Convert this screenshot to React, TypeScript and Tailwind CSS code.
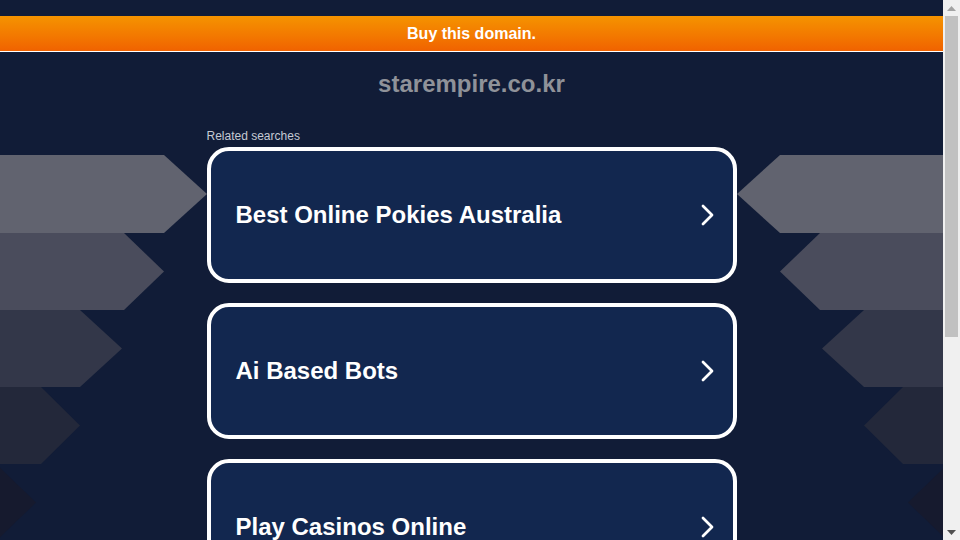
import React from "react";

const cards = ["Best Online Pokies Australia", "Ai Based Bots", "Play Casinos Online"];

function Background() {
  const rows = [
    { y0: 155, y1: 233, flat: 164, tip: 207, color: "#61636f" },
    { y0: 233, y1: 310, flat: 124, tip: 164, color: "#4a4c5c" },
    { y0: 310, y1: 387, flat: 80, tip: 122, color: "#333749" },
    { y0: 387, y1: 464, flat: 41, tip: 80, color: "#23283a" },
    { y0: 464, y1: 541, flat: -4, tip: 36, color: "#161a2e" },
  ];
  const W = 943;
  return (
    <svg className="absolute left-0 top-0 pointer-events-none" width={W} height={600} viewBox={`0 0 ${W} 600`}>
      {rows.map((r, i) => {
        const mid = (r.y0 + r.y1) / 2;
        const left = `-10,${r.y0} ${r.flat},${r.y0} ${r.tip},${mid} ${r.flat},${r.y1} -10,${r.y1}`;
        const rf = 944 - r.flat;
        const rt = 944 - r.tip;
        const right = `${W + 10},${r.y0} ${rf},${r.y0} ${rt},${mid} ${rf},${r.y1} ${W + 10},${r.y1}`;
        return (
          <g key={i}>
            <polygon points={left} fill={r.color} />
            <polygon points={right} fill={r.color} />
          </g>
        );
      })}
    </svg>
  );
}

function Scrollbar() {
  return (
    <div className="w-[17px] h-full bg-[#f0f0f0] flex flex-col items-center">
      <div className="h-[16px] w-full flex items-center justify-center">
        <svg width="9" height="5" viewBox="0 0 9 5">
          <polygon points="0,5 4.5,0 9,5" fill="#a3a3a3" />
        </svg>
      </div>
      <div className="w-[13px] h-[321px] bg-[#c1c1c1]" />
      <div className="flex-1" />
      <div className="h-[16px] w-full flex items-center justify-center">
        <svg width="9" height="5" viewBox="0 0 9 5">
          <polygon points="0,0 9,0 4.5,5" fill="#505050" />
        </svg>
      </div>
    </div>
  );
}

export default function App() {
  return (
    <div className="h-[540px] flex overflow-hidden font-['Liberation_Sans',Arial,sans-serif]">
      <div className="relative flex-1 bg-[#111c37] overflow-hidden">
        <Background />
        <div className="relative flex flex-col pt-4">
          <div className="h-9 border-b border-white bg-gradient-to-b from-[#f59300] to-[#f06200] flex items-center justify-center">
            <span className="text-white font-bold text-[16px] leading-none">Buy this domain.</span>
          </div>
          <div className="mt-[18px] text-center text-[24px] leading-[28px] font-bold text-[#8f9299]">starempire.co.kr</div>
          <div className="mx-auto w-[530px] mt-[31px] flex flex-col">
            <div className="text-[12px] leading-[14px] text-[#c5cad3]">Related searches</div>
            <div className="mt-1 flex flex-col gap-5">
              {cards.map((c) => (
                <div
                  key={c}
                  className="h-[136px] rounded-[22px] border-4 border-white bg-[#12274f] flex items-center justify-between pl-[25px] pr-[17px]"
                >
                  <span className="text-white font-bold text-[24px] leading-none">{c}</span>
                  <svg width="16" height="24" viewBox="0 0 16 24">
                    <polyline points="3,3 12,12 3,21" fill="none" stroke="white" strokeWidth="2.75" strokeLinecap="round" strokeLinejoin="round" />
                  </svg>
                </div>
              ))}
            </div>
          </div>
        </div>
      </div>
      <Scrollbar />
    </div>
  );
}
